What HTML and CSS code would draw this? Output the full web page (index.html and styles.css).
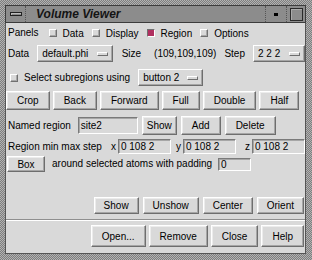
FILE: index.html
```html
<!DOCTYPE html>
<html>
<head>
<meta charset="utf-8">
<link rel="stylesheet" href="styles.css">
</head>
<body>
<div class="win">
  <div class="titlebar">
    <div class="tb-btn tb-menu"><span class="dash"></span></div>
    <div class="tb-title">Volume Viewer</div>
    <div class="tb-btn tb-min"><span class="dot"></span></div>
    <div class="tb-btn tb-max"><span class="sq"></span></div>
  </div>
  <div class="client">
    <div class="top">
      <div class="row r1">
        <span class="lbl">Panels</span>
        <span class="chk"><i class="ind"></i>Data</span>
        <span class="chk"><i class="ind"></i>Display</span>
        <span class="chk"><i class="ind on"></i>Region</span>
        <span class="chk"><i class="ind"></i>Options</span>
      </div>
      <div class="row r2">
        <span class="lbl">Data</span>
        <span class="mb mb-data">default.phi<i class="mbi"></i></span>
        <span class="lbl size">Size</span>
        <span class="lbl dims">(109,109,109)</span>
        <span class="lbl step">Step</span>
        <span class="mb mb-step">2 2 2<i class="mbi"></i></span>
      </div>
      <div class="row r3">
        <span class="chk sub"><i class="ind"></i>Select subregions using</span>
        <span class="mb mb-btn">button 2<i class="mbi"></i></span>
      </div>
      <div class="row r4">
        <span class="btn">Crop</span>
        <span class="btn">Back</span>
        <span class="btn">Forward</span>
        <span class="btn">Full</span>
        <span class="btn">Double</span>
        <span class="btn">Half</span>
      </div>
      <div class="row r5">
        <span class="lbl">Named region</span>
        <span class="ent ent-name">site2</span>
        <span class="btn narrow">Show</span>
        <span class="btn">Add</span>
        <span class="btn">Delete</span>
      </div>
      <div class="row r6">
        <span class="lbl">Region min max step</span>
        <span class="lbl ax">x</span><span class="ent ent-ax">0 108 2</span>
        <span class="lbl ax">y</span><span class="ent ent-ax">0 108 2</span>
        <span class="lbl ax">z</span><span class="ent ent-ax">0 108 2</span>
      </div>
      <div class="row r7">
        <span class="btn">Box</span>
        <span class="lbl around">around selected atoms with padding</span>
        <span class="ent ent-pad">0</span>
      </div>
      <div class="row r8">
        <span class="btn">Show</span>
        <span class="btn">Unshow</span>
        <span class="btn">Center</span>
        <span class="btn">Orient</span>
      </div>
    </div>
    <div class="bottom">
      <div class="row r9">
        <span class="btn big">Open...</span>
        <span class="btn big">Remove</span>
        <span class="btn big">Close</span>
        <span class="btn big">Help</span>
      </div>
    </div>
  </div>
</div>
</body>
</html>
```
FILE: styles.css
```css
* { box-sizing: border-box; margin: 0; padding: 0; }
html, body { width: 312px; height: 260px; overflow: hidden; }
body {
  font-family: "Liberation Sans", Arial, Helvetica, sans-serif;
  font-size: 10px;
  color: #000;
  background: #9a9a9a;
}
.win {
  width: 312px;
  height: 260px;
  padding: 5px 6px 6px 5px;
  background: repeating-conic-gradient(#7e7e7e 0 25%, #b2b2b2 0 50%) 0 0 / 2px 2px;
  display: flex;
  flex-direction: column;
}
.titlebar {
  height: 18px;
  display: flex;
  background: #8c8c8c;
  border: 1px solid #3c3c3c;
}
.tb-btn {
  display: flex;
  align-items: center;
  justify-content: center;
}
.tb-menu { width: 20px; border-right: 1px dotted #555; }
.dash {
  width: 12px; height: 4px;
  background: #8c8c8c;
  border: 1px solid #222;
  box-shadow: inset 1px 1px #bcbcbc;
}
.tb-title {
  flex: 1;
  padding-left: 10px;
  font-weight: bold;
  font-style: italic;
  font-size: 12px;
  line-height: 16px;
  color: #141414;
}
.tb-min { width: 21px; border-left: 1px dotted #555; }
.dot { width: 4px; height: 3px; background: #000; }
.tb-max { width: 19px; border-left: 1px dotted #555; }
.sq {
  width: 13px; height: 13px;
  border: 1px solid #2a2a2a;
  box-shadow: inset 1px 1px #aaa;
  background: #8c8c8c;
}
.client {
  flex: 1;
  background: #d9d9d9;
  border: 1px solid #555;
  border-top: none;
  display: flex;
  flex-direction: column;
}
.top {
  height: 197px;
  padding-top: 2px;
  border-bottom: 1px solid #8f8f8f;
  box-shadow: 0 1px #fff;
}
.row {
  display: flex;
  align-items: center;
  white-space: nowrap;
}
.lbl { line-height: 12px; }
.r1 { height: 16px; padding-left: 2px; }
.r1 .lbl { margin-right: 10px; }
.chk { display: inline-flex; align-items: center; margin-right: 8px; }
.ind {
  display: inline-block;
  width: 8px; height: 8px;
  margin-right: 6px;
  background: #d9d9d9;
  border: 1px solid;
  border-color: #fff #707070 #707070 #fff;
  box-shadow: inset -1px -1px #a8a8a8;
}
.ind.on {
  background: #b03060;
  border-color: #707070 #fff #fff #707070;
  box-shadow: none;
}
.r2 { height: 17px; margin-top: 4px; padding-left: 2px; }
.r2 .lbl:first-child { margin-right: 8px; }
.mb {
  display: inline-flex;
  align-items: center;
  height: 17px;
  padding: 0 4px;
  border: 1px solid;
  border-color: #fff #6e6e6e #6e6e6e #fff;
  box-shadow: inset -1px -1px #a6a6a6;
}
.mbi {
  display: inline-block;
  width: 11px; height: 4px;
  margin-left: auto;
  border: 1px solid;
  border-color: #fff #6e6e6e #6e6e6e #fff;
}
.mb-data { width: 77px; }
.size { margin-left: 9px; }
.dims { margin-left: 13px; }
.step { margin-left: 8px; }
.mb-step { width: 53px; margin-left: 8px; }
.r3 { height: 17px; margin-top: 7px; padding-left: 4px; }
.mb-btn { width: 65px; }
.btn {
  display: inline-flex;
  align-items: center;
  justify-content: center;
  height: 100%;
  padding: 0 10px;
  border: 1px solid;
  border-color: #fff #6e6e6e #6e6e6e #fff;
  box-shadow: inset -1px -1px #a6a6a6, inset 1px 1px #ececec;
}
.r4 { height: 19px; margin-top: 5px; gap: 3px; }
.r5 { height: 19px; margin-top: 6px; padding-left: 2px; gap: 4px; }
.r5 .lbl { margin-right: 3px; }
.btn.narrow { padding: 0 4px; }
.ent {
  display: inline-flex;
  align-items: center;
  padding-left: 2px;
  border: 1px solid;
  border-color: #7a7a7a #fff #fff #7a7a7a;
  box-shadow: inset 1px 1px #a6a6a6;
}
.ent-name { width: 60px; height: 17px; }
.r6 { height: 15px; margin-top: 4px; padding-left: 2px; }
.ax { margin-left: 9px; margin-right: 2px; }
.ent-ax { width: 54px; height: 15px; }
.r6 .ax:nth-of-type(3), .r6 .ax:nth-of-type(4) { margin-left: 5px; }
.r7 { height: 16px; margin-top: 2px; padding-left: 1px; }
.r7 .btn { width: 38px; }
.around { margin-left: 7px; }
.ent-pad { width: 33px; height: 13px; margin-left: 6px; }
.r8 { height: 17px; margin-top: 25px; justify-content: flex-end; gap: 4px; padding-right: 1px; }
.r8 .btn { padding: 0 9px; }
.bottom { flex: 1; padding-top: 5px; }
.r9 { height: 22px; justify-content: flex-end; gap: 3px; padding-right: 1px; }
.btn.big { padding: 0 10px; }
```
